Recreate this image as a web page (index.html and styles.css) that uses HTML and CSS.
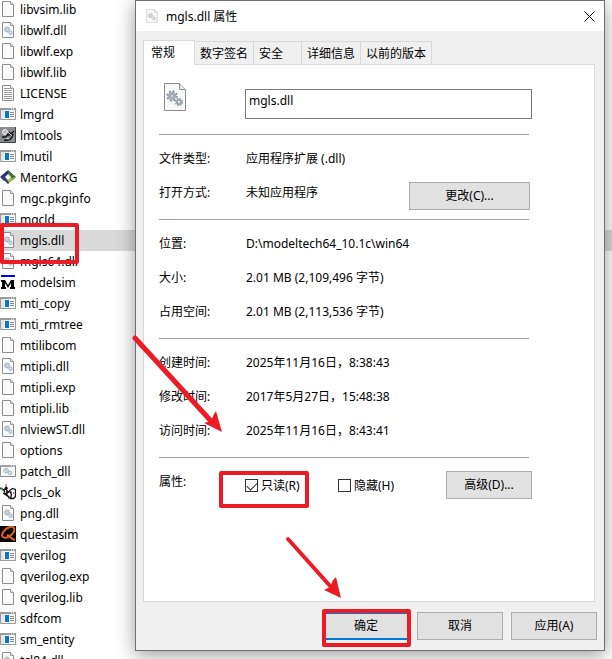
FILE: index.html
```html
<!DOCTYPE html>
<html lang="zh-CN">
<head>
    <meta charset="UTF-8">
    <meta name="viewport" content="width=device-width, initial-scale=1.0">
    <title>mgls.dll 属性</title>
    <link rel="stylesheet" href="styles.css">
</head>
<body>
    <!-- file icons -->
    <svg class="defs" aria-hidden="true">
        <symbol id="file" viewBox="0 0 16 16">
            <path d="M2.5 .5h8l3 3v12h-11z" fill="#fafafa" stroke="#8c8c8c"/>
            <path d="M10.5 .5v3h3" fill="#e4e4e4" stroke="#9a9a9a"/>
        </symbol>
        <symbol id="text" viewBox="0 0 16 16">
            <path d="M2.5 .5h8l3 3v12h-11z" fill="#fafafa" stroke="#8c8c8c"/>
            <path d="M10.5 .5v3h3" fill="#e4e4e4" stroke="#9a9a9a"/>
            <path d="M4 3.5h6M4 5.5h8M4 7.5h8M4 9.5h8M4 11.5h8M4 13.5h8" stroke="#9a9a9a"/>
        </symbol>
        <symbol id="dll" viewBox="0 0 16 16">
            <path d="M2.5 .5h8l3 3v12h-11z" fill="#fafafa" stroke="#8c8c8c"/>
            <path d="M10.5 .5v3h3" fill="#e4e4e4" stroke="#9a9a9a"/>
            <circle cx="7" cy="7.5" r="2.3" fill="#eef0f1" stroke="#a0a8ad" stroke-width="1.4" stroke-dasharray="1.3 .5"/>
            <circle cx="7" cy="7.5" r="1" fill="#fff" stroke="#8b959b" stroke-width=".6"/>
            <circle cx="10.5" cy="10.8" r="1.6" fill="#d6e8f4" stroke="#85b0cc" stroke-width="1.2" stroke-dasharray="1 .5"/>
        </symbol>
        <symbol id="exe" viewBox="0 0 16 16">
            <path d="M.5 2.5h15v11H.5z" fill="#f8f8f8" stroke="#9a9a9a"/>
            <path d="M0 2h16v2H0z" fill="#9a9a9a"/>
            <path d="M1 4h3v9H1z" fill="#e6e6e6"/>
            <path d="M11 2.500h1v1h-1zM13 2.500h1v1h-1z" fill="#fff"/>
            <path d="M5 5h4v7H5z" fill="#0078d7"/>
            <path d="M10 6.5h4M10 8.5h4M10 10.5h4" stroke="#888"/>
        </symbol>
        <symbol id="batch" viewBox="0 0 16 16">
            <path d="M.5 2.5h15v11H.5z" fill="#f8f8f8" stroke="#8c8c8c"/>
            <path d="M0 2h16v2H0z" fill="#a0a0a0"/>
            <path d="M11 2.5h1v1h-1zM13 2.5h1v1h-1z" fill="#fff"/>
            <circle cx="6" cy="7.5" r="2.2" fill="#eef0f1" stroke="#a0a8ad" stroke-width="1.3" stroke-dasharray="1.2 .5"/>
            <circle cx="6" cy="7.5" r=".8" fill="#fff" stroke="#8b959b" stroke-width=".5"/>
            <circle cx="10" cy="10" r="1.7" fill="#d6e8f4" stroke="#85b0cc" stroke-width="1.2" stroke-dasharray="1 .5"/>
        </symbol>
        <symbol id="tools" viewBox="0 0 16 16">
            <path d="M0 0h16v16H0z" fill="#8d8d8d"/>
            <path d="M0 15.5h15.500V0" fill="none" stroke="#444"/>
            <circle cx="5" cy="5" r="2.5" fill="#bbb" stroke="#eee"/>
            <path d="M9 5l2 2 3-3M2 10h4l2-3 2 2M4 13c4 1 8 0 9-6" fill="none" stroke="#151515" stroke-width="1.5"/>
            <path d="M8 5l4 4M6 11l3 1" stroke="#b8cde0"/>
        </symbol>
        <symbol id="mentor" viewBox="0 0 16 16">
            <path d="M8 1l4 4-4 3-4 4-4-4z" fill="#2b2f70"/>
            <path d="M8 1l8 7-3 3-5-5z" fill="#3f7040"/>
            <path d="M15 9l-7 6-4-4 4-3 4 2 2-2z" fill="#9cb83c"/>
            <path d="M1 8l4-1 4 7-1 1z" fill="#35406c"/>
            <path d="M8 5l3 3-3 3-3-3z" fill="#fff"/>
        </symbol>
        <symbol id="modelsim" viewBox="0 0 16 16">
            <path d="M1 1h14v2H1z" fill="#0000f0"/>
            <path d="M1 6h4l3 5 3-5h3v7h1v2h-5v-2h1V9l-3 5-3-5v4h1v2H1v-2h1V8H1z" fill="#000"/>
        </symbol>
        <symbol id="pcls" viewBox="0 0 16 16">
            <path d="M0 4l4 1 2-3 2 2-1 2 3 2-3 2 3 3-1 1-4-3-2-1 1-3-4-2z" fill="#111"/>
            <path d="M0 3l3 2M1 5l2 1" stroke="#30a030"/>
            <path d="M5 1h2" stroke="#c22"/>
            <path d="M5 6l1 1-1 2" fill="none" stroke="#fff"/>
            <path d="M9.500 6.500l3-2 3 1v7l-2 2h-3l1-4z" fill="#fff" stroke="#111" stroke-width="1.300"/>
            <path d="M11 8h1M13 9h1M8 14h2" stroke="#111"/>
        </symbol>
        <symbol id="questa" viewBox="0 0 16 16">
            <path d="M0 0h16v16H0z" fill="#0c0502"/>
            <path d="M10 1c5-1 5 3 3 6s-7 6-10 4S5 2 10 1z" fill="none" stroke="#e0601e" stroke-width="2"/>
            <path d="M7 9c3 1 4 4 8 5" fill="none" stroke="#e0601e" stroke-width="2"/>
        </symbol>
        <symbol id="gears" viewBox="0 0 22 28">
            <path d="M.5 .5h15l6 6v21H.5z" fill="#f8f9f9" stroke="#8c8c8c"/>
            <path d="M15.5 .5v6h6" fill="#ececec" stroke="#8c8c8c"/>
            <circle cx="8" cy="13" r="4.8" fill="none" stroke="#8b969e" stroke-width="1.8" stroke-dasharray="2 1.77"/>
            <circle cx="8" cy="13" r="3.2" fill="#dde2e5" stroke="#a3adb4" stroke-width="2"/>
            <circle cx="8" cy="13" r="1.5" fill="#fff" stroke="#88939b"/>
            <circle cx="15" cy="19" r="3.4" fill="none" stroke="#8b969e" stroke-width="1.4" stroke-dasharray="1.5 1.17"/>
            <circle cx="15" cy="19" r="2.2" fill="#c4d5e0" stroke="#919ca5" stroke-width="1.5"/>
            <circle cx="15" cy="19" r=".8" fill="#fff"/>
        </symbol>
    </svg>

    <ul class="files">
        <li><svg><use href="#file"/></svg>libvsim.lib</li>
        <li><svg><use href="#dll"/></svg>libwlf.dll</li>
        <li><svg><use href="#file"/></svg>libwlf.exp</li>
        <li><svg><use href="#file"/></svg>libwlf.lib</li>
        <li><svg><use href="#text"/></svg>LICENSE</li>
        <li><svg><use href="#exe"/></svg>lmgrd</li>
        <li><svg><use href="#tools"/></svg>lmtools</li>
        <li><svg><use href="#exe"/></svg>lmutil</li>
        <li><svg><use href="#mentor"/></svg>MentorKG</li>
        <li><svg><use href="#file"/></svg>mgc.pkginfo</li>
        <li><svg><use href="#exe"/></svg>mgcld</li>
        <li class="selected"><svg><use href="#dll"/></svg>mgls.dll<span class="mark mark-file"></span></li>
        <li><svg><use href="#dll"/></svg>mgls64.dll</li>
        <li><svg><use href="#modelsim"/></svg>modelsim</li>
        <li><svg><use href="#exe"/></svg>mti_copy</li>
        <li><svg><use href="#exe"/></svg>mti_rmtree</li>
        <li><svg><use href="#file"/></svg>mtilibcom</li>
        <li><svg><use href="#dll"/></svg>mtipli.dll</li>
        <li><svg><use href="#file"/></svg>mtipli.exp</li>
        <li><svg><use href="#file"/></svg>mtipli.lib</li>
        <li><svg><use href="#dll"/></svg>nlviewST.dll</li>
        <li><svg><use href="#file"/></svg>options</li>
        <li><svg><use href="#batch"/></svg>patch_dll</li>
        <li><svg><use href="#pcls"/></svg>pcls_ok</li>
        <li><svg><use href="#dll"/></svg>png.dll</li>
        <li><svg><use href="#questa"/></svg>questasim</li>
        <li><svg><use href="#exe"/></svg>qverilog</li>
        <li><svg><use href="#file"/></svg>qverilog.exp</li>
        <li><svg><use href="#file"/></svg>qverilog.lib</li>
        <li><svg><use href="#exe"/></svg>sdfcom</li>
        <li><svg><use href="#exe"/></svg>sm_entity</li>
        <li><svg><use href="#dll"/></svg>tcl84.dll</li>
    </ul>

    <form class="dialog" onsubmit="return false">
        <div class="titlebar">
            <svg class="title-icon"><use href="#gears"/></svg>
            <span class="title">mgls.dll 属性</span>
            <button type="button" class="close" aria-label="关闭">
                <svg viewBox="0 0 11 11"><path d="M.5 .5l10 10M10.5 .5l-10 10" stroke="#000" fill="none"/></svg>
            </button>
        </div>

        <div class="tabs" role="tablist">
            <button type="button" role="tab" class="tab active" aria-selected="true">常规</button>
            <button type="button" role="tab" class="tab">数字签名</button>
            <button type="button" role="tab" class="tab short">安全</button>
            <button type="button" role="tab" class="tab">详细信息</button>
            <button type="button" role="tab" class="tab">以前的版本</button>
        </div>

        <div class="panel">
            <div class="name-row">
                <svg class="big-icon"><use href="#gears"/></svg>
                <input type="text" class="name" value="mgls.dll" aria-label="文件名">
            </div>
            <hr>
            <dl class="info">
                <dt>文件类型:</dt>
                <dd>应用程序扩展 (.dll)</dd>
                <dt>打开方式:</dt>
                <dd>未知应用程序<button type="button" class="btn change">更改(C)...</button></dd>
            </dl>
            <hr>
            <dl class="info">
                <dt>位置:</dt>
                <dd>D:\modeltech64_10.1c\win64</dd>
                <dt>大小:</dt>
                <dd>2.01 MB (2,109,496 字节)</dd>
                <dt>占用空间:</dt>
                <dd>2.01 MB (2,113,536 字节)</dd>
            </dl>
            <hr>
            <dl class="info">
                <dt>创建时间:</dt>
                <dd>2025年11月16日，8:38:43</dd>
                <dt>修改时间:</dt>
                <dd>2017年5月27日，15:48:38</dd>
                <dt>访问时间:</dt>
                <dd>2025年11月16日，8:43:41</dd>
            </dl>
            <hr>
            <div class="attrs">
                <span class="attrs-label">属性:</span>
                <label class="check"><input type="checkbox" checked>只读(R)<span class="mark mark-check"></span></label>
                <label class="check"><input type="checkbox">隐藏(H)</label>
                <button type="button" class="btn">高级(D)...</button>
            </div>
        </div>

        <div class="footer">
            <button type="submit" class="btn ok">确定<span class="mark mark-ok"></span></button>
            <button type="button" class="btn">取消</button>
            <button type="button" class="btn">应用(A)</button>
        </div>

        <!-- arrows to the check box and the OK button -->
        <svg class="arrow arrow-check" viewBox="0 0 92 98">
            <path d="M4 3l76 83" stroke="#ed1c24" stroke-width="5" stroke-linecap="round"/>
            <path d="M91 97l-18-9 7-2 3-7 2-3z" fill="#ed1c24"/>
        </svg>
        <svg class="arrow arrow-ok" viewBox="0 0 58 64">
            <path d="M4 4l43 48" stroke="#ed1c24" stroke-width="4" stroke-linecap="round"/>
            <path d="M57 63l-17-8 6-3 3-7 3-3z" fill="#ed1c24"/>
        </svg>
    </form>
</body>
</html>
```

FILE: styles.css
```css
* {
    box-sizing: border-box;
}
body {
    position: relative;
    margin: 0;
    height: 100vh;
    overflow: hidden;
    background-color: #fff;
    color: #000;
    font-family: "Noto Sans", "Noto Sans CJK SC", sans-serif;
    font-size: 12px;
}
button, input {
    font: inherit;
    color: inherit;
    border-radius: 0;
}
.defs {
    position: absolute;
    width: 0;
    height: 0;
}

/* file list */
.files {
    list-style: none;
    margin: -1px 0 0;
    padding: 0;
}
.files li {
    position: relative;
    display: flex;
    align-items: center;
    gap: 4px;
    height: 21px;
    padding-bottom: 1px;
}
.files svg {
    width: 16px;
    height: 16px;
}
.files .selected {
    background-color: #d9d9d9;
}

/* dialog */
.dialog {
    position: absolute;
    top: 0;
    left: 135px;
    right: 7px;
    display: flex;
    flex-direction: column;
    background-color: #f0f0f0;
    border: 1px solid #6e6e6e;
    box-shadow: 0 4px 18px rgba(0, 0, 0, 0.4);
}
.titlebar {
    display: flex;
    align-items: center;
    gap: 8px;
    height: 30px;
    padding: 0 9px 0 10px;
    background-color: #fff;
}
.title-icon {
    width: 12px;
    height: 14px;
    opacity: 0.7;
}
.title {
    flex: 1;
}
.close {
    display: flex;
    padding: 0;
    border: 0;
    background: none;
}
.close svg {
    width: 11px;
    height: 11px;
}
.tabs {
    display: flex;
    align-items: flex-end;
    margin: 9px 8px 0 7px;
}
.tab {
    height: 23px;
    padding: 0 5px;
    border: 1px solid #d9d9d9;
    border-width: 1px 1px 0 0;
    background-color: #f0f0f0;
    text-align: left;
}
.tab.short {
    padding-right: 18px;
}
.tab.active {
    position: relative;
    height: 25px;
    margin-bottom: -1px;
    padding: 0 19px 2px 7px;
    border-left-width: 1px;
    background-color: #fff;
}
.panel {
    min-height: 538px;
    margin: 0 9px 0 7px;
    padding: 18px 62px 0 15px;
    border: 1px solid #d9d9d9;
    background-color: #fff;
}
.name-row {
    display: flex;
    align-items: flex-start;
    padding-bottom: 15px;
}
.big-icon {
    width: 22px;
    height: 28px;
    margin: 0 59px 0 5px;
}
.name {
    flex: 1;
    min-width: 0;
    height: 30px;
    margin-top: 6px;
    padding: 0 3px 8px;
    border: 1px solid #7a7a7a;
}
hr {
    margin: 0 3px 0 0;
    border: 0;
    border-top: 1px solid #a0a0a0;
}
.info {
    display: grid;
    grid-template-columns: 86px 1fr;
    grid-auto-rows: 34px;
    margin: 0;
    padding: 7px 2px 9px 0;
    line-height: 34px;
}
.info dd {
    display: flex;
    align-items: flex-end;
    justify-content: space-between;
    margin: 0;
    padding-left: 1px;
}
.btn {
    width: 86px;
    height: 28px;
    padding: 0;
    border: 1px solid #adadad;
    background-color: #e1e1e1;
    line-height: 24px;
}
.btn.change {
    width: 121px;
}
.attrs {
    display: grid;
    grid-template-columns: 86px 93px 1fr auto;
    align-items: center;
    padding-top: 13px;
}
.attrs-label {
    align-self: start;
    line-height: 22px;
}
.check {
    position: relative;
    display: flex;
    align-items: center;
    gap: 3px;
}
.check input {
    appearance: none;
    width: 13px;
    height: 13px;
    margin: 0;
    border: 1px solid #333;
    background-color: #fff;
}
.check input:checked::before {
    content: "";
    display: block;
    width: 9px;
    height: 5px;
    margin: 2px 1px;
    border: solid #333;
    border-width: 0 0 1px 1px;
    transform: rotate(-45deg);
}
.footer {
    display: flex;
    justify-content: flex-end;
    gap: 8px;
    padding: 10px 7px;
}
.btn.ok {
    position: relative;
    border: 2px solid #0078d7;
}

/* red annotations */
.mark {
    position: absolute;
    border: 4px solid #ed1c24;
    border-radius: 2px;
    pointer-events: none;
}
.mark-file {
    z-index: 1;
    top: -7px;
    left: 0;
    width: 79px;
    height: 41px;
}
.mark-check {
    top: -5px;
    left: -26px;
    width: 90px;
    height: 37px;
}
.mark-ok {
    top: -5px;
    left: -3px;
    width: 89px;
    height: 38px;
}
.arrow {
    position: absolute;
    pointer-events: none;
}
.arrow-check {
    top: 334px;
    left: -5px;
    width: 92px;
    height: 98px;
}
.arrow-ok {
    top: 534px;
    left: 148px;
    width: 58px;
    height: 64px;
}
```
